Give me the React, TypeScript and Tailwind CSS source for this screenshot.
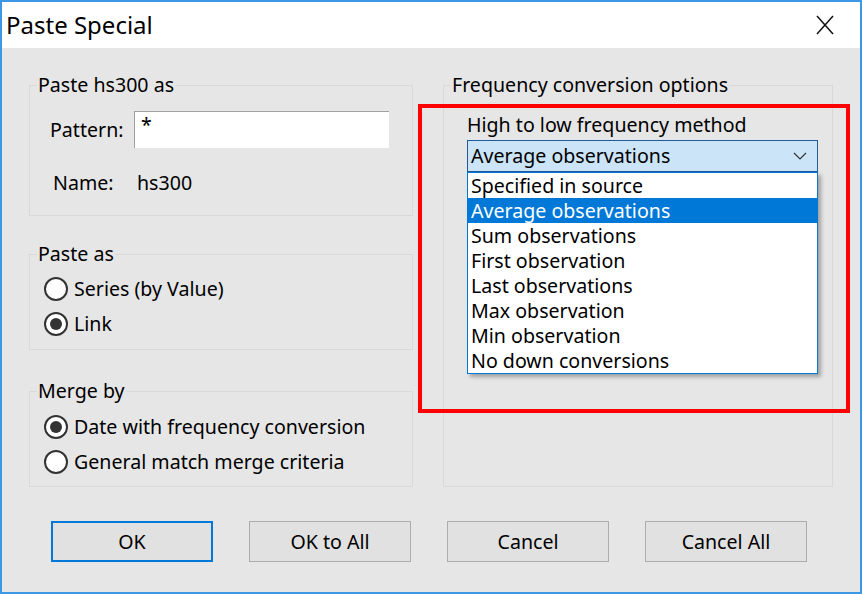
import { ReactNode } from "react";

const methods = [
  "Specified in source",
  "Average observations",
  "Sum observations",
  "First observation",
  "Last observations",
  "Max observation",
  "Min observation",
  "No down conversions",
];

function Radio({ checked, label }: { checked?: boolean; label: string }) {
  return (
    <div className="h-[35px] flex items-center gap-[6px] pl-[7px]">
      <div className="w-[24px] h-[24px] rounded-full border-2 border-[#333] bg-white flex items-center justify-center">
        {checked && <div className="w-[12px] h-[12px] rounded-full bg-[#333]" />}
      </div>
      <span>{label}</span>
    </div>
  );
}

function Group({ title, className, children }: { title: string; className: string; children: ReactNode }) {
  return (
    <fieldset className={`border border-[#d9d9d9] px-[7px] ${className}`}>
      <legend className="px-[1px] leading-[24px]">{title}</legend>
      {children}
    </fieldset>
  );
}

function Button({ label, focused }: { label: string; focused?: boolean }) {
  return (
    <button
      className={`w-[162px] h-[41px] bg-[#e1e1e1] flex items-center justify-center ${
        focused ? "border-2 border-[#0078d7]" : "border border-[#adadad]"
      }`}
    >
      {label}
    </button>
  );
}

export default function App() {
  return (
    <div className="relative w-[862px] h-[594px] border-2 border-[#3c98e4] bg-[#e6e6e6] flex flex-col font-['Noto_Sans',sans-serif] text-[19.6px] text-black">
      {/* title bar */}
      <div className="h-[46px] shrink-0 bg-white flex items-center justify-between pl-[4px] pr-[26px]">
        <span className="text-[24px]">Paste Special</span>
        <svg width="18" height="20" viewBox="0 0 18 20">
          <line x1="1" y1="1" x2="17" y2="19" stroke="#111" strokeWidth="1.5" />
          <line x1="17" y1="1" x2="1" y2="19" stroke="#111" strokeWidth="1.5" />
        </svg>
      </div>

      <div className="flex gap-[30px] px-[27px] pt-[25px]">
        <div className="w-[384px] flex flex-col">
          <Group title="Paste hs300 as" className="h-[143px]">
            <div className="flex items-center mt-[14px] pl-[13px]">
              <span className="w-[84px]">Pattern:</span>
              <div className="w-[255px] h-[37px] bg-white border-t border-l border-[#a0a0a0] pl-[6px] leading-[26px]">
                *
              </div>
            </div>
            <div className="flex items-center mt-[22px] pl-[16px] leading-[25px]">
              <span className="w-[84px]">Name:</span>
              <span>hs300</span>
            </div>
          </Group>

          <Group title="Paste as" className="h-[108px] mt-[26px]">
            <div className="mt-[5px]">
              <Radio label="Series (by Value)" />
              <Radio label="Link" checked />
            </div>
          </Group>

          <Group title="Merge by" className="h-[108px] mt-[29px]">
            <div className="mt-[6px]">
              <Radio label="Date with frequency conversion" checked />
              <Radio label="General match merge criteria" />
            </div>
          </Group>
        </div>

        <Group title="Frequency conversion options" className="w-[390px] h-[414px]">
          <div className="pl-[16px] mt-[16px]">
            <div className="leading-[24px]">High to low frequency method</div>
            <div className="relative mt-[3px] w-[351px] h-[32px] bg-[#cce4f7] border border-[#1e5c9b] flex items-center justify-between pl-[3px] pr-[10px]">
              <span>Average observations</span>
              <svg width="14" height="8" viewBox="0 0 14 8">
                <polyline points="1,1 7,7 13,1" fill="none" stroke="#333" strokeWidth="1.2" />
              </svg>
              <div className="absolute left-[-1px] top-[31px] w-[351px] bg-white border border-[#0078d7] shadow-[3px_3px_4px_rgba(0,0,0,0.3)]">
                {methods.map((m, i) => (
                  <div
                    key={m}
                    className={`h-[25px] leading-[25px] pl-[3px] ${
                      i === 1 ? "bg-[#0078d7] text-white" : ""
                    }`}
                  >
                    {m}
                  </div>
                ))}
              </div>
            </div>
          </div>
        </Group>
      </div>

      <div className="flex gap-[36px] pl-[49px] mt-[34px]">
        <Button label="OK" focused />
        <Button label="OK to All" />
        <Button label="Cancel" />
        <Button label="Cancel All" />
      </div>

      {/* red highlight annotation */}
      <div className="absolute left-[416px] top-[102px] w-[432px] h-[309px] border-4 border-[#ff0000]" />
    </div>
  );
}
